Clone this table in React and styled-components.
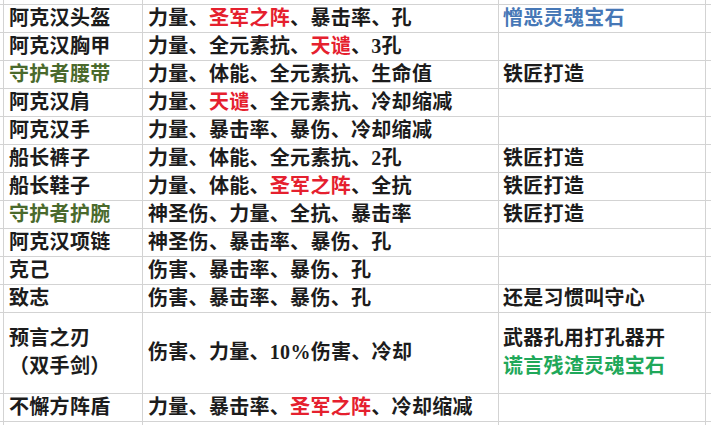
import React from "react";
import styled, { createGlobalStyle } from "styled-components";

const GlobalStyle = createGlobalStyle`
  html, body {
    margin: 0;
    padding: 0;
    background: #ffffff;
  }
  body {
    font-family: "Liberation Serif", "Noto Sans CJK SC", serif;
  }
`;

const RED = "#e5202e";
const BLUE = "#4677b6";
const OLIVE = "#4a6a2c";
const GREEN = "#1fa85a";

// each piece: [text, colour?]
const rows = [
  {
    name: [["阿克汉头盔"]],
    attrs: [["力量、"], ["圣军之阵", RED], ["、暴击率、孔"]],
    note: [[["憎恶灵魂宝石", BLUE]]],
  },
  {
    name: [["阿克汉胸甲"]],
    attrs: [["力量、全元素抗、"], ["天谴", RED], ["、3孔"]],
    note: [],
  },
  {
    name: [["守护者腰带", OLIVE]],
    attrs: [["力量、体能、全元素抗、生命值"]],
    note: [[["铁匠打造"]]],
  },
  {
    name: [["阿克汉肩"]],
    attrs: [["力量、"], ["天谴", RED], ["、全元素抗、冷却缩减"]],
    note: [],
  },
  {
    name: [["阿克汉手"]],
    attrs: [["力量、暴击率、暴伤、冷却缩减"]],
    note: [],
  },
  {
    name: [["船长裤子"]],
    attrs: [["力量、体能、全元素抗、2孔"]],
    note: [[["铁匠打造"]]],
  },
  {
    name: [["船长鞋子"]],
    attrs: [["力量、体能、"], ["圣军之阵", RED], ["、全抗"]],
    note: [[["铁匠打造"]]],
  },
  {
    name: [["守护者护腕", OLIVE]],
    attrs: [["神圣伤、力量、全抗、暴击率"]],
    note: [[["铁匠打造"]]],
  },
  {
    name: [["阿克汉项链"]],
    attrs: [["神圣伤、暴击率、暴伤、孔"]],
    note: [],
  },
  {
    name: [["克己"]],
    attrs: [["伤害、暴击率、暴伤、孔"]],
    note: [],
  },
  {
    name: [["致志"]],
    attrs: [["伤害、暴击率、暴伤、孔"]],
    note: [[["还是习惯叫守心"]]],
  },
  {
    name: [["预言之刃"], ["（双手剑）"]],
    attrs: [["伤害、力量、10%伤害、冷却"]],
    note: [[["武器孔用打孔器开"]], [["谎言残渣灵魂宝石", GREEN]]],
  },
  {
    name: [["不懈方阵盾"]],
    attrs: [["力量、暴击率、"], ["圣军之阵", RED], ["、冷却缩减"]],
    note: [],
  },
];

const Sheet = styled.div`
  display: grid;
  grid-template-columns: 3px 138px 355px 206px 1fr;
  grid-template-rows: 4px repeat(11, 27px) 80px 27px 1fr;
  gap: 1px;
  background: #d3d3d3;
  width: 711px;
  height: 425px;
  overflow: hidden;
`;

const Stub = styled.div`
  background: #ffffff;
`;

const Cell = styled.div`
  background: #ffffff;
  display: flex;
  flex-direction: column;
  justify-content: center;
  padding: 0 0 2px ${(p) => p.$pad}px;
  font-size: 20px;
  line-height: 28px;
  letter-spacing: 0.3px;
  font-weight: 700;
  color: #1c1c1c;
  white-space: nowrap;
`;

const Line = styled.div`
  display: block;
`;

const Mark = styled.span`
  color: ${(p) => p.$color || "inherit"};
`;

const Pieces = ({ parts }) =>
  parts.map(([text, color], i) => (
    <Mark key={i} $color={color}>
      {text}
    </Mark>
  ));

const App = () => {
  return (
    <>
      <GlobalStyle />
      <Sheet>
        {/* cut-off row above */}
        <Stub />
        <Stub />
        <Stub />
        <Stub />
        <Stub />

        {rows.map((row, i) => (
          <React.Fragment key={i}>
            <Stub />
            <Cell $pad={5}>
              {row.name.map((part, j) => (
                <Line key={j}>
                  <Pieces parts={[part]} />
                </Line>
              ))}
            </Cell>
            <Cell $pad={5}>
              <Line>
                <Pieces parts={row.attrs} />
              </Line>
            </Cell>
            <Cell $pad={4}>
              {row.note.map((parts, j) => (
                <Line key={j}>
                  <Pieces parts={parts} />
                </Line>
              ))}
            </Cell>
            <Stub />
          </React.Fragment>
        ))}

        {/* cut-off row below */}
        <Stub />
        <Stub />
        <Stub />
        <Stub />
        <Stub />
      </Sheet>
    </>
  );
};

export default App;
